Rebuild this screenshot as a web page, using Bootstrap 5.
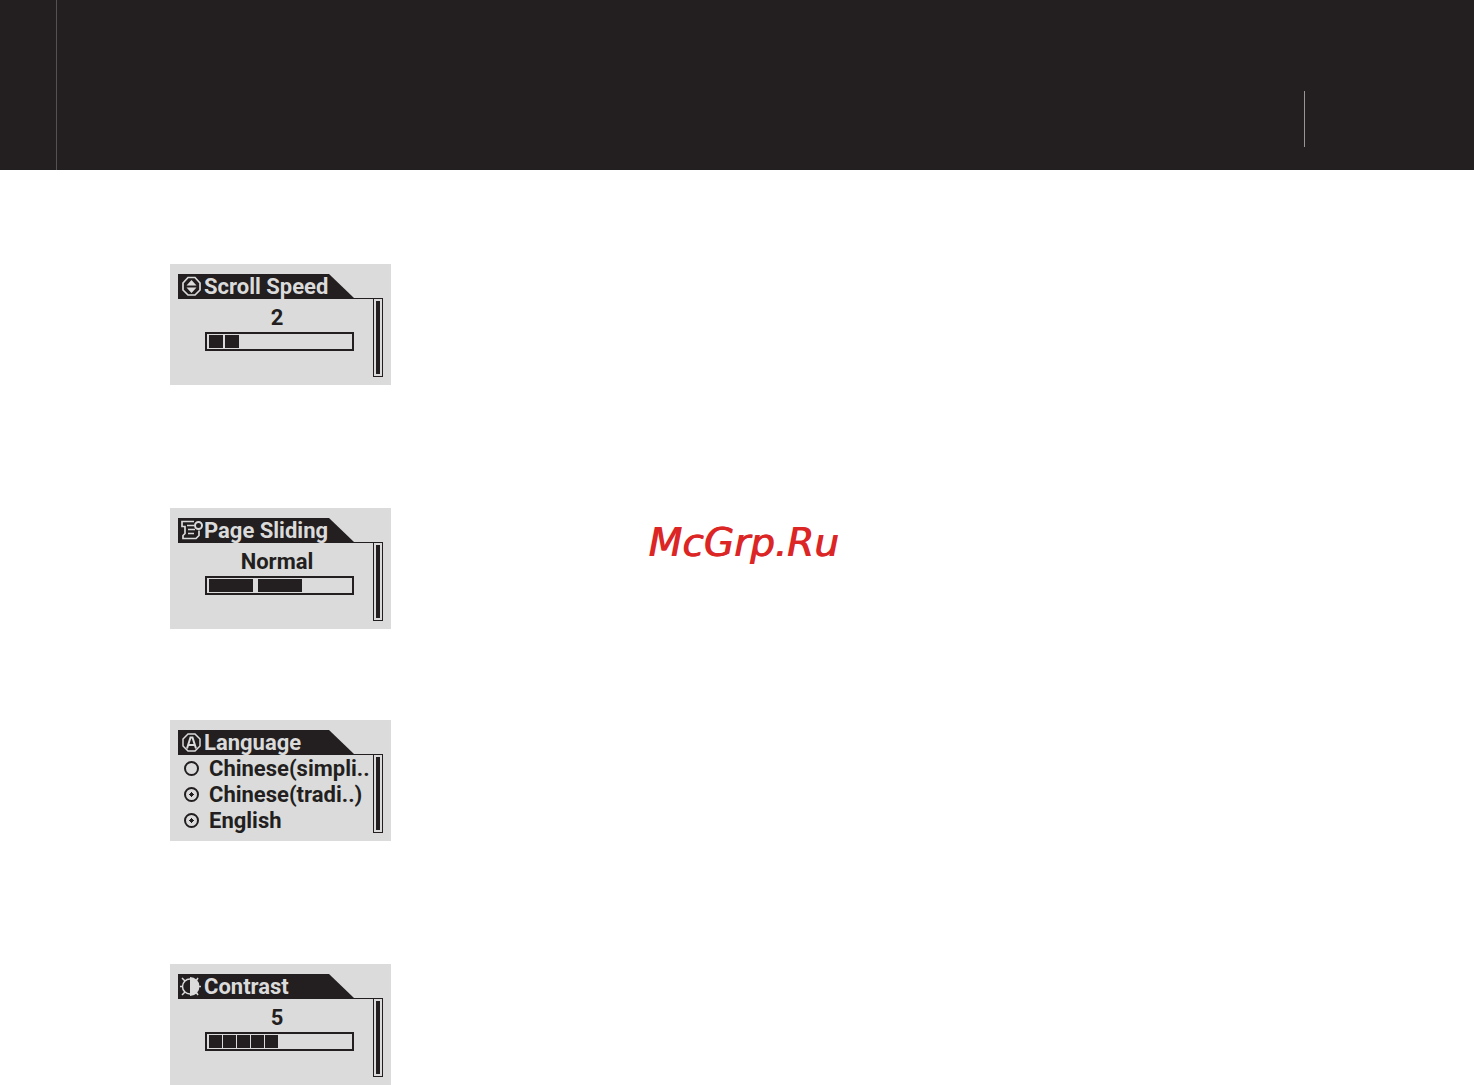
<!DOCTYPE html>
<html lang="en">
<head>
<meta charset="utf-8">
<meta name="viewport" content="width=device-width, initial-scale=1">
<title>Display settings</title>
<link href="https://cdn.jsdelivr.net/npm/bootstrap@5.3.0/dist/css/bootstrap.min.css" rel="stylesheet">
<style>
:root { --ink: #231f20; --lcd: #dbdbdb; }
body { background: #fff; color: var(--ink); font-family: Roboto, "Liberation Sans", sans-serif; }
.masthead { height: 170px; background: var(--ink); }
.masthead-edge { width: 57px; border-right: 1px solid #555152; }
.masthead-rule { width: 1px; height: 56px; margin: 0 169px 23px 0; background: #989596; }
.screens { padding: 94px 0 0 170px; }
.screen-pair { gap: 123px; }
.pair-stack { gap: 91px; }
.lcd { width: 221px; height: 121px; padding: 10px 8px 8px; background: var(--lcd); font-size: 22px; font-weight: 700; line-height: 26px; }
.lcd-title { height: 25px; border-bottom: 1px solid var(--ink); font-size: 22px; font-weight: 700; line-height: 26px; color: var(--lcd); isolation: isolate; }
.lcd-title::before { content: ""; position: absolute; z-index: -1; inset: 0 auto 0 0; width: 176px; background: var(--ink); clip-path: polygon(0 0, 151px 0, 100% 100%, 0 100%); }
.lcd-icon { width: 24px; height: 24px; margin: 0 1px; fill: none; stroke: var(--lcd); stroke-width: 2; }
.lcd-scroll { width: 10px; height: 79px; margin-top: -1px; padding: 2px; border: 1px solid var(--ink); }
.lcd-scroll::before { content: ""; display: block; height: 100%; background: var(--ink); }
.lcd-value { height: 33px; padding: 6px 0 0 3px; }
.meter { width: 149px; height: 19px; margin-left: 27px; padding: 1px 2px; border: 2px solid var(--ink); }
.meter span { background: var(--ink); }
.meter-two { gap: 2px; }
.meter-long { gap: 5px; }
.meter-fine { gap: 1px; }
.meter-two span { width: 14px; }
.meter-long span { width: 44px; }
.meter-fine span { width: 13px; }
.choices { padding-top: 1px; }
.choice { height: 26px; padding-left: 6px; gap: 10px; white-space: nowrap; }
.choice input { appearance: none; width: 15px; height: 15px; margin: 0 0 2px; border: 2px solid var(--ink); border-radius: 50%; flex: none; }
.choice .dotted { background: linear-gradient(var(--ink), var(--ink)) center / 5px 1px no-repeat, linear-gradient(var(--ink), var(--ink)) center / 1px 5px no-repeat, linear-gradient(var(--ink), var(--ink)) center / 3px 3px no-repeat; }
.choice input:focus-visible { outline: 1px solid var(--ink); }
.watermark { padding-left: 13px; color: #dc2626; font: italic 400 39px/44px "DejaVu Sans", sans-serif; text-shadow: 1px 0 0 #dc2626; }
</style>
</head>
<body>
<div class="position-relative overflow-hidden">
<header class="masthead d-flex justify-content-between align-items-end">
  <div class="masthead-edge h-100"></div>
  <div class="masthead-rule"></div>
</header>
<main class="screens d-flex flex-column pair-stack">
  <div class="screen-pair d-flex flex-column">
    <section class="lcd">
      <h2 class="lcd-title position-relative d-flex m-0">
        <svg class="lcd-icon" viewBox="0 0 24 24" aria-hidden="true"><path d="M9 3.500h7l5 5.500v7l-5 5H9l-5-5V9z" stroke-width="1.700"/><path d="M12.500 6l5 5.500H7.500zM12.500 19L7.500 13.500h10z" fill="#dbdbdb" stroke="none"/></svg>
        <span>Scroll Speed</span>
      </h2>
      <div class="d-flex">
        <div class="flex-grow-1">
          <div class="lcd-value text-center">2</div>
          <div class="meter meter-two d-flex" role="meter" aria-label="Scroll Speed" aria-valuenow="2" aria-valuemin="0" aria-valuemax="9"><span></span><span></span></div>
        </div>
        <div class="lcd-scroll"></div>
      </div>
    </section>
    <section class="lcd">
      <h2 class="lcd-title position-relative d-flex m-0">
        <svg class="lcd-icon" viewBox="0 0 24 24" aria-hidden="true"><path d="M15 3.500H3v5h3v7l-2 2v3h13l3-3v-5M8 7.500h7M9 11.500h7M9 15.500h6" stroke-width="1.700"/><circle cx="19.500" cy="7.500" r="3.500"/></svg>
        <span>Page Sliding</span>
      </h2>
      <div class="d-flex">
        <div class="flex-grow-1">
          <div class="lcd-value text-center">Normal</div>
          <div class="meter meter-long d-flex" role="meter" aria-label="Page Sliding" aria-valuenow="2" aria-valuemin="0" aria-valuemax="3"><span></span><span></span></div>
        </div>
        <div class="lcd-scroll"></div>
      </div>
    </section>
  </div>
  <div class="screen-pair d-flex flex-column">
    <section class="lcd">
      <h2 class="lcd-title position-relative d-flex m-0">
        <svg class="lcd-icon" viewBox="0 0 24 24" aria-hidden="true"><path d="M9 4h7l5 5v7l-5 5H9l-5-5V9z" stroke-width="1.500"/><path d="M8 18.500l3.500-11h2l3.500 11M9.500 15h6"/></svg>
        <span>Language</span>
      </h2>
      <div class="d-flex">
        <div class="flex-grow-1 choices">
          <label class="choice d-flex align-items-center"><input type="radio" name="language"><span>Chinese(simpli..</span></label>
          <label class="choice d-flex align-items-center"><input class="dotted" type="radio" name="language"><span>Chinese(tradi..)</span></label>
          <label class="choice d-flex align-items-center"><input class="dotted" type="radio" name="language"><span>English</span></label>
        </div>
        <div class="lcd-scroll"></div>
      </div>
    </section>
    <section class="lcd">
      <h2 class="lcd-title position-relative d-flex m-0">
        <svg class="lcd-icon" viewBox="0 0 24 24" aria-hidden="true"><path d="M11 5a7.500 7.500 0 0 0 0 15" stroke-width="1.500"/><path d="M11 3a9.500 9.500 0 0 1 0 19z" fill="#dbdbdb" stroke="none"/><path d="M1 12.500h3M20 12.500h2M3 4l3 3M19 4l-2 3M3 21l3-3M19 21l-2-3" stroke-width="1.500"/></svg>
        <span>Contrast</span>
      </h2>
      <div class="d-flex">
        <div class="flex-grow-1">
          <div class="lcd-value text-center">5</div>
          <div class="meter meter-fine d-flex" role="meter" aria-label="Contrast" aria-valuenow="5" aria-valuemin="0" aria-valuemax="10"><span></span><span></span><span></span><span></span><span></span></div>
        </div>
        <div class="lcd-scroll"></div>
      </div>
    </section>
  </div>
</main>
<div class="position-absolute top-0 start-0 w-100 h-100 d-flex align-items-center justify-content-center pe-none"><div class="watermark">McGrp.Ru</div></div>
</div>
<script src="https://cdn.jsdelivr.net/npm/bootstrap@5.3.0/dist/js/bootstrap.bundle.min.js"></script>
</body>
</html>
